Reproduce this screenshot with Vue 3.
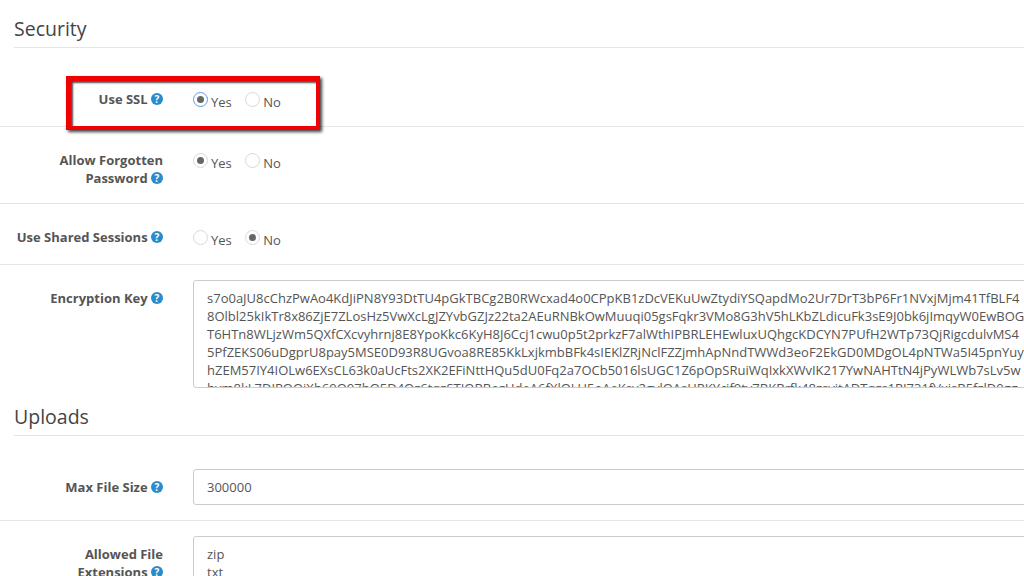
<template>
  <div class="page">
    <section class="section security">
      <h2 class="section-title">Security</h2>

      <div class="row ssl-row">
        <div class="label">Use SSL <span class="help">?</span></div>
        <div class="radios">
          <label v-for="opt in options" :key="opt" class="radio">
            <span class="dot" :class="{ on: opt === 'Yes', focus: opt === 'Yes' }"></span>{{ opt }}
          </label>
        </div>
      </div>

      <div class="row forgot-row">
        <div class="label">Allow Forgotten<br />Password <span class="help">?</span></div>
        <div class="radios">
          <label v-for="opt in options" :key="opt" class="radio">
            <span class="dot" :class="{ on: opt === 'Yes' }"></span>{{ opt }}
          </label>
        </div>
      </div>

      <div class="row shared-row">
        <div class="label">Use Shared Sessions <span class="help">?</span></div>
        <div class="radios">
          <label v-for="opt in options" :key="opt" class="radio">
            <span class="dot" :class="{ on: opt === 'No' }"></span>{{ opt }}
          </label>
        </div>
      </div>

      <div class="row key-row">
        <div class="label">Encryption Key <span class="help">?</span></div>
        <div class="field key-box">
          <div v-for="line in keyLines" :key="line" class="line">{{ line }}</div>
        </div>
      </div>
    </section>

    <section class="section uploads">
      <h2 class="section-title">Uploads</h2>

      <div class="row size-row">
        <div class="label">Max File Size <span class="help">?</span></div>
        <div class="field size-box">300000</div>
      </div>

      <div class="row ext-row">
        <div class="label">Allowed File<br />Extensions <span class="help">?</span></div>
        <div class="field ext-box">
          <div class="line">zip</div>
          <div class="line">txt</div>
        </div>
      </div>
    </section>

    <div class="highlight"></div>
  </div>
</template>

<script setup>
const options = ['Yes', 'No']

const keyLines = [
  's7o0aJU8cChzPwAo4KdJiPN8Y93DtTU4pGkTBCg2B0RWcxad4o0CPpKB1zDcVEKuUwZtydiYSQapdMo2Ur7DrT3bP6Fr1NVxjMjm41TfBLF4',
  '8Olbl25kIkTr8x86ZjE7ZLosHz5VwXcLgJZYvbGZJz22ta2AEuRNBkOwMuuqi05gsFqkr3VMo8G3hV5hLKbZLdicuFk3sE9J0bk6jImqyW0EwBOG',
  'T6HTn8WLjzWm5QXfCXcvyhrnj8E8YpoKkc6KyH8J6Ccj1cwu0p5t2prkzF7alWthIPBRLEHEwluxUQhgcKDCYN7PUfH2WTp73QjRigcdulvMS4',
  '5PfZEKS06uDgprU8pay5MSE0D93R8UGvoa8RE85KkLxjkmbBFk4sIEKlZRjNclFZZjmhApNndTWWd3eoF2EkGD0MDgOL4pNTWa5I45pnYuy',
  'hZEM57IY4IOLw6EXsCL63k0aUcFts2XK2EFiNttHQu5dU0Fq2a7OCb5016lsUGC1Z6pOpSRuiWqIxkXWvIK217YwNAHTtN4jPyWLWb7sLv5w',
  'hvm8kL7DIPQQiXb69Q97hQ5D4Qz6tqzSTIQBBozUdeA6fXlQLU5oAeKsv2gvlQAsHPKYcif9ty7BKBrfk48zsvitADTqzs1PI731fVxjsB5fzlD0gg'
]
</script>

<style>
html,
body {
  margin: 0;
  background: #fff;
  overflow: hidden;
}
</style>

<style scoped>
.page {
  position: relative;
  width: 1024px;
  height: 576px;
  overflow: hidden;
  background: #fff;
  color: #555;
  font-family: "Open Sans", "Liberation Sans", sans-serif;
  font-size: 13px;
  line-height: 18px;
}

.section-title {
  margin: 0 0 0 14px;
  padding: 15px 0 4px;
  height: 28px;
  border-bottom: 1px solid #e5e5e5;
  font-size: 19.5px;
  font-weight: 400;
  line-height: 28px;
  color: #444;
}

.row {
  display: flex;
  gap: 30px;
  border-bottom: 1px solid #e5e5e5;
}

.label {
  flex: 0 0 163px;
  text-align: right;
  font-weight: 700;
  color: #555;
}

.help {
  display: inline-block;
  width: 12px;
  height: 12px;
  border-radius: 50%;
  background: #2a8bcb;
  color: #fff;
  font-size: 10px;
  font-weight: 700;
  line-height: 12px;
  text-align: center;
  vertical-align: 1px;
}

.radios {
  display: flex;
  gap: 13.5px;
}

.radio {
  display: flex;
  align-items: flex-start;
  gap: 3px;
  line-height: 18px;
  padding-top: 3px;
}

.dot {
  flex: none;
  box-sizing: border-box;
  width: 15px;
  height: 15px;
  margin-top: -1px;
  border: 1px solid #d9d9d9;
  border-radius: 50%;
  background: #fff;
  position: relative;
}

.dot.on::after {
  content: "";
  position: absolute;
  inset: 3px;
  border-radius: 50%;
  background: #666;
}

.dot.focus {
  border-color: #5b9dee;
}

.field {
  box-sizing: border-box;
  flex: 0 0 900px;
  border: 1px solid #ccc;
  border-radius: 3px;
  padding: 8px 13px;
  overflow: hidden;
  background: #fff;
}

.line {
  white-space: nowrap;
}

.ssl-row {
  height: 36px;
  padding-top: 42px;
}

.forgot-row {
  height: 52px;
  padding-top: 24px;
}

.shared-row {
  height: 36px;
  padding-top: 24px;
}

.key-row {
  padding-top: 15px;
  border-bottom: 0;
}

.key-row .label {
  padding-top: 9px;
}

.key-box {
  height: 108px;
}

.size-row {
  padding: 33px 0 15px;
}

.size-row .label {
  padding-top: 9px;
}

.size-box {
  height: 36px;
}

.ext-row {
  padding-top: 15px;
  border-bottom: 0;
}

.ext-row .label {
  padding-top: 9px;
}

.ext-box {
  height: 120px;
}

.highlight {
  position: absolute;
  left: 66px;
  top: 76px;
  width: 245px;
  height: 45px;
  border-style: solid;
  border-width: 5px 4px 4px 5px;
  border-color: #f00000;
  box-shadow: 2px 2px 3px rgba(0, 0, 0, 0.75), inset 2px 2px 2px rgba(0, 0, 0, 0.7);
}
</style>
